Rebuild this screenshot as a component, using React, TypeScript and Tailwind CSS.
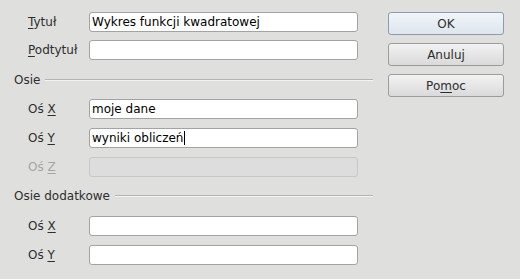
import React from 'react';

const font = { fontFamily: '"DejaVu Sans", "Liberation Sans", sans-serif' };

// Label with underlined mnemonic
const Mn = ({ pre = '', k, post = '' }: { pre?: string; k: string; post?: string }) => (
  <span>
    {pre}
    <span className="underline underline-offset-2">{k}</span>
    {post}
  </span>
);

const Field = ({
  label,
  value,
  disabled,
  caret,
  indent = 'pl-[28px]',
}: {
  label: React.ReactNode;
  value?: string;
  disabled?: boolean;
  caret?: boolean;
  indent?: string;
}) => (
  <div className={`flex items-center h-[20px] ${indent}`}>
    <div className={`w-[61px] text-[12px] ${disabled ? 'text-[#a6a6a6]' : 'text-[#2e2e2e]'}`}>{label}</div>
    <div
      className={`flex items-center h-[20px] w-[269px] rounded-[3px] border px-[2px] text-[12px] ${
        disabled ? 'bg-[#dddddd] border-[#c8c8c8]' : 'bg-white border-[#a3a3a3] text-black'
      }`}
    >
      {value}
      {caret && <span className="ml-[1px] inline-block w-[1px] h-[14px] bg-black" />}
    </div>
  </div>
);

const Heading = ({ text }: { text: string }) => (
  <div className="flex items-center h-[20px] pl-[14px]">
    <span className="text-[12px] text-[#2e2e2e] pr-[5px]">{text}</span>
    <div className="flex-1 border-t border-[#b4b4b4] border-b border-b-[#f4f4f4]" />
  </div>
);

const Btn = ({ children, primary }: { children: React.ReactNode; primary?: boolean }) => (
  <div
    className={`flex items-center justify-center h-[23px] w-[116px] rounded-[3px] border text-[12px] text-[#2e2e2e] ${
      primary
        ? 'border-[#8d9cae] bg-gradient-to-b from-[#f1f5f9] to-[#dde5ee]'
        : 'border-[#9c9c9c] bg-gradient-to-b from-[#f2f2f2] to-[#dadada]'
    }`}
  >
    {children}
  </div>
);

export default function App() {
  return (
    <div className="w-[520px] h-[279px] bg-[#dfdfde] flex" style={font}>
      <div className="w-[373px] pt-[12px] flex flex-col">
        <Field label={<Mn k="T" post="ytuł" />} value="Wykres funkcji kwadratowej" />
        <div className="mt-[8px]">
          <Field label={<Mn k="P" post="odtytuł" />} />
        </div>
        <div className="mt-[10px]">
          <Heading text="Osie" />
        </div>
        <div className="mt-[9px]">
          <Field label={<Mn pre="Oś " k="X" />} value="moje dane" />
        </div>
        <div className="mt-[9px]">
          <Field label={<Mn pre="Oś " k="Y" />} value="wyniki obliczeń" caret />
        </div>
        <div className="mt-[9px]">
          <Field label={<Mn pre="Oś " k="Z" />} disabled />
        </div>
        <div className="mt-[9px]">
          <Heading text="Osie dodatkowe" />
        </div>
        <div className="mt-[10px]">
          <Field label={<Mn pre="Oś " k="X" />} />
        </div>
        <div className="mt-[9px]">
          <Field label={<Mn pre="Oś " k="Y" />} />
        </div>
      </div>
      <div className="ml-[15px] pt-[12px] flex flex-col gap-[8px]">
        <Btn primary>OK</Btn>
        <Btn>Anuluj</Btn>
        <Btn>
          <Mn pre="Po" k="m" post="oc" />
        </Btn>
      </div>
    </div>
  );
}
